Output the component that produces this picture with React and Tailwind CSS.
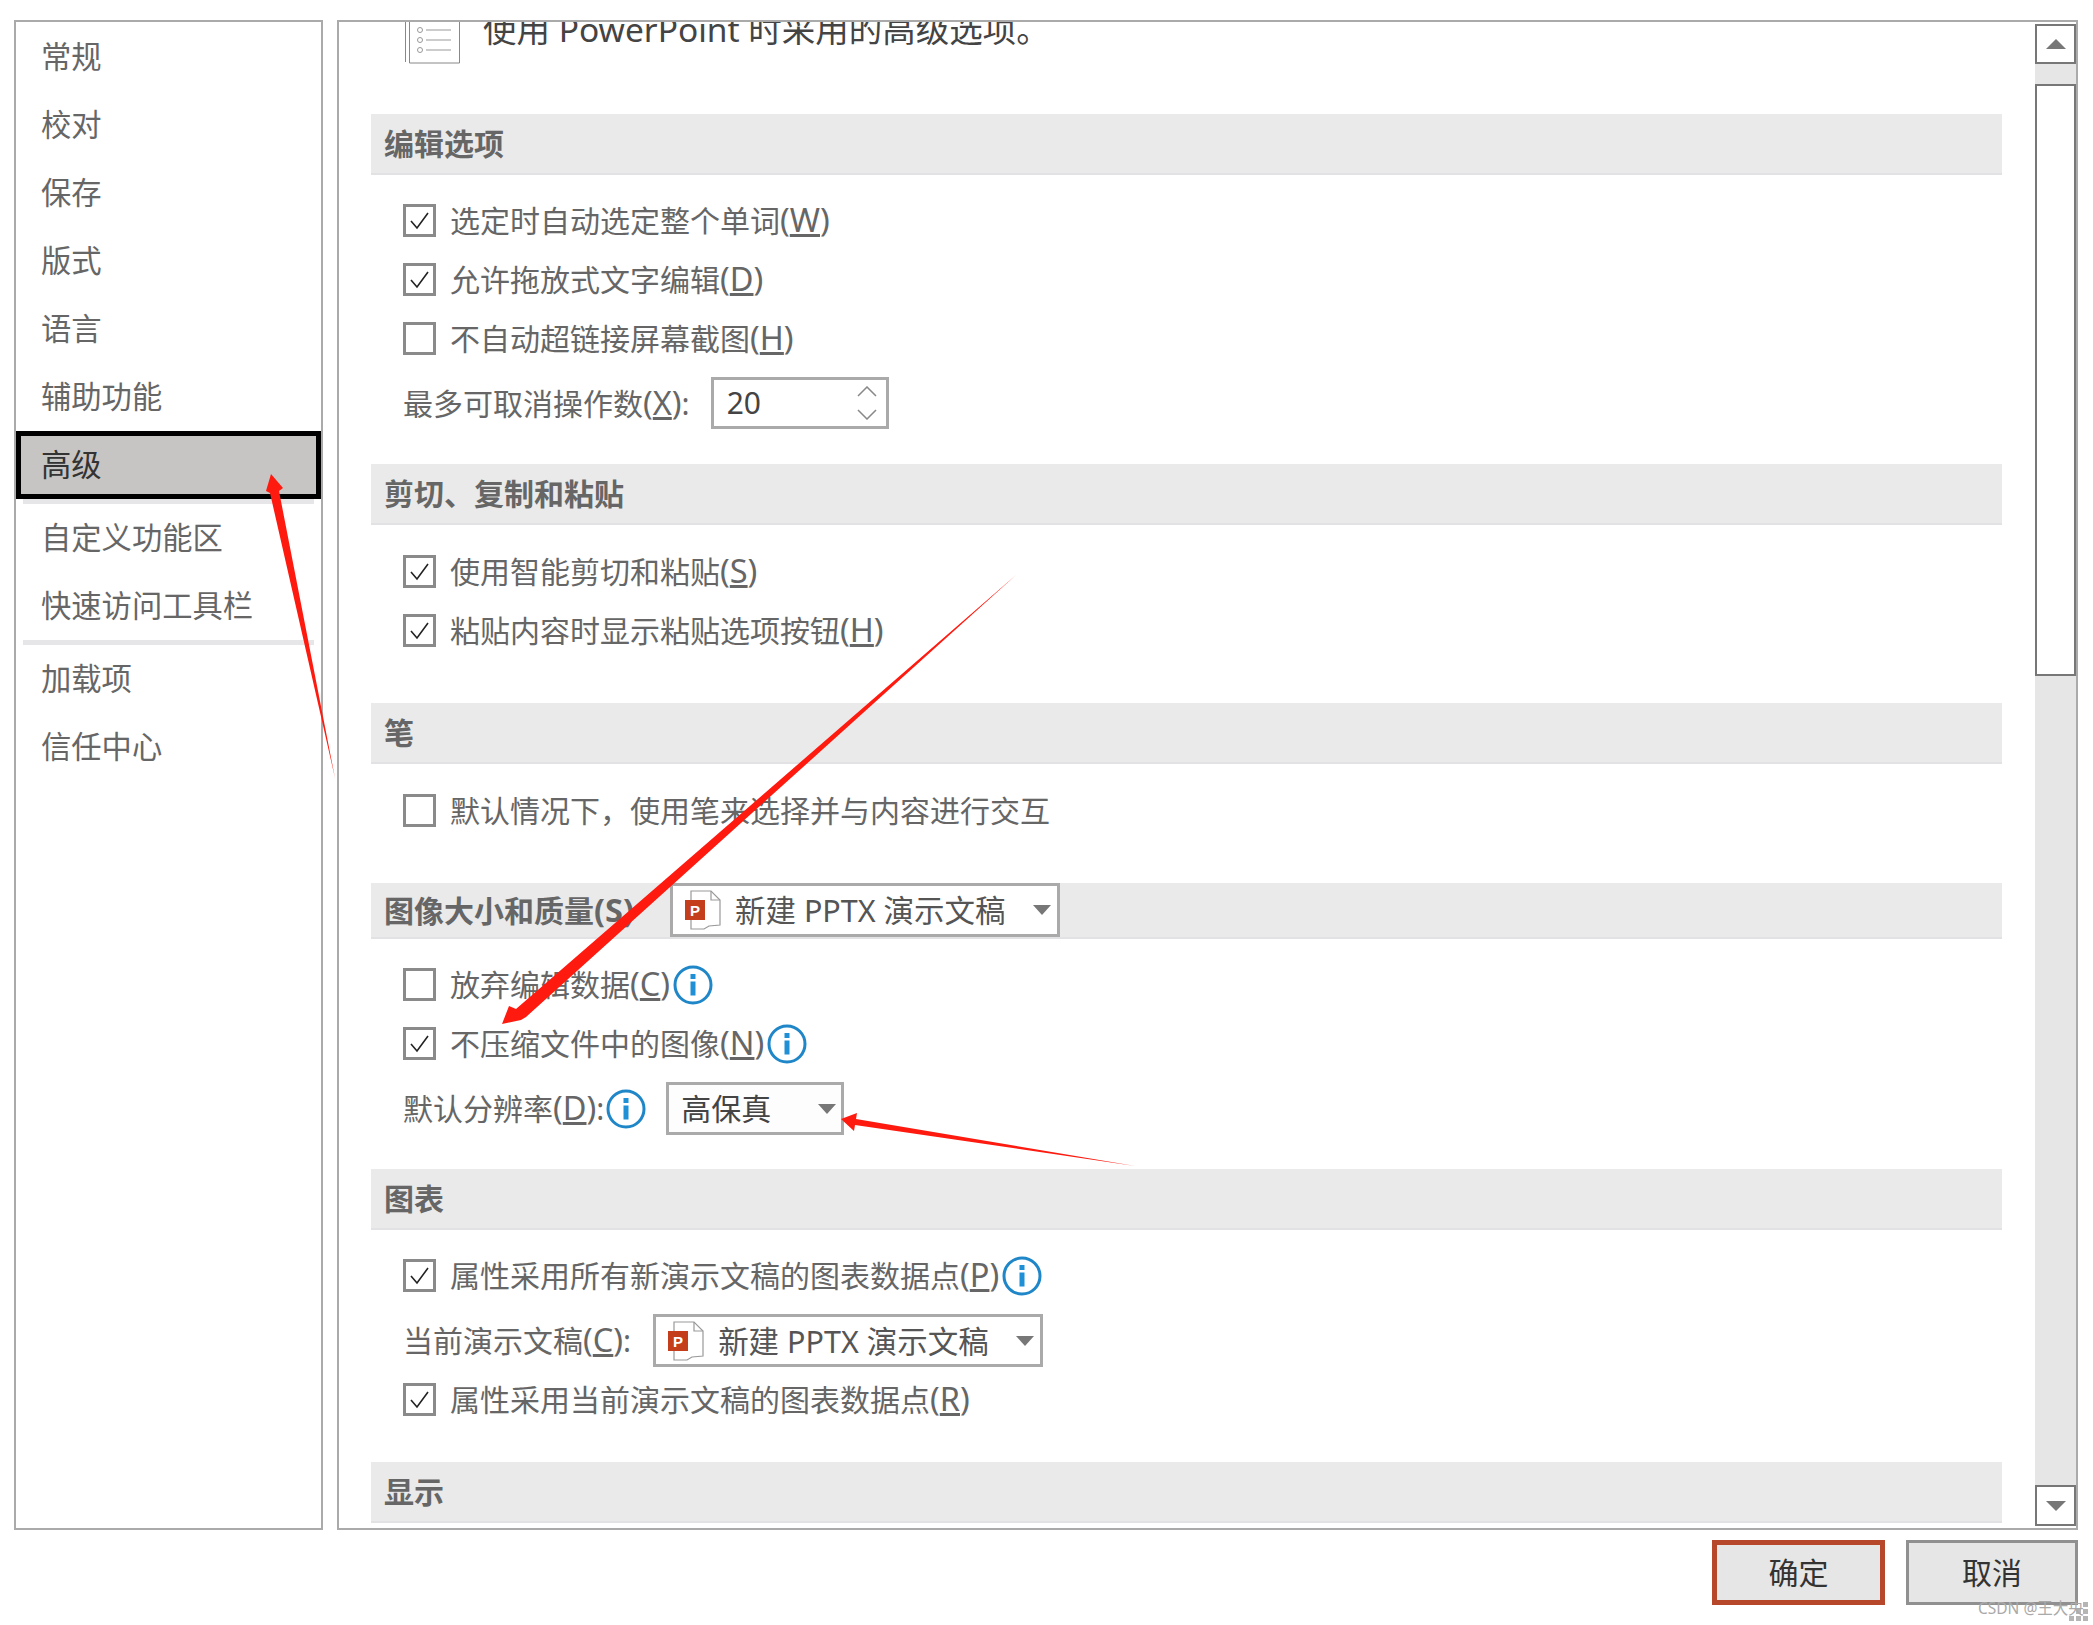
import React from "react";

const Caret = ({ className = "" }) => (
  <svg width="18" height="10" viewBox="0 0 18 10" className={className}>
    <polygon points="0,0 18,0 9,10" fill="#777" />
  </svg>
);

const Info = ({ className = "" }) => (
  <svg width="40" height="40" viewBox="0 0 40 40" className={`shrink-0 ${className}`}>
    <circle cx="20" cy="20" r="18" fill="#fff" stroke="#1f86c8" strokeWidth="3" />
    <rect x="17.5" y="9" width="5" height="5" fill="#1f8fd6" />
    <rect x="17.5" y="16.5" width="5" height="14" fill="#1f8fd6" />
  </svg>
);

const Ppt = ({ className = "" }) => (
  <svg width="46" height="40" viewBox="0 0 46 40" className={`shrink-0 ${className}`}>
    <path d="M6 1H26L35 10V35L24 36L19 39H6Z" fill="#fff" stroke="#999" strokeWidth="1.2" />
    <path d="M26 1V10H35" fill="none" stroke="#999" strokeWidth="1.2" />
    <rect x="0" y="10" width="20" height="20" fill="#c43e1c" />
    <text x="10" y="25.5" textAnchor="middle" fill="#fff" fontSize="15" fontWeight="700" fontFamily="'Liberation Sans', sans-serif">P</text>
  </svg>
);

const Check = ({ checked }) => (
  <span className="flex h-[33px] w-[33px] shrink-0 items-center justify-center border-[3px] border-[#8a8a8a] bg-white">
    {checked && (
      <svg width="21" height="21" viewBox="0 0 21 21">
        <path d="M2 11L8 18L19 3" fill="none" stroke="#222" strokeWidth="1.6" />
      </svg>
    )}
  </span>
);

const Key = ({ children }) => (
  <span className="text-[32.5px]">
    (<u>{children}</u>)
  </span>
);

const Row = ({ checked, children, info }) => (
  <div className="flex h-[59px] items-center pl-8">
    <Check checked={checked} />
    <span className="ml-[14px] whitespace-nowrap">{children}</span>
    {info && <Info className="ml-[3px]" />}
  </div>
);

const Header = ({ children, tall = true }) => (
  <div className={`flex items-center border-b-2 border-[#e2e2e4] bg-[#eaeaea] pl-[13px] font-bold ${tall ? "h-[61px]" : "h-[56px]"}`}>
    {children}
  </div>
);

const Nav = ({ children, active }) => (
  <div
    className={
      active
        ? "flex h-[68px] items-center border-[5px] border-black bg-[#c6c5c4] pl-5 text-[30.3px] text-[#333]"
        : "flex h-[68px] items-center pl-[25px] text-[30.3px]"
    }
  >
    {children}
  </div>
);

const Sep = () => <div className="mx-[7px] h-[5px] bg-[#e6e6e8]" />;

export default function App() {
  return (
    <div className="relative h-[1625px] w-[2093px] overflow-hidden bg-white pl-[14px] pt-5 font-['Noto_Sans','Noto_Sans_CJK_SC',sans-serif] text-[30px] leading-[40px] text-[#666]">
      <div className="flex gap-[14px]">
        <aside className="h-[1510px] w-[309px] border-2 border-[#aaaaaa] pt-px">
          <Nav>常规</Nav>
          <Nav>校对</Nav>
          <Nav>保存</Nav>
          <Nav>版式</Nav>
          <Nav>语言</Nav>
          <Nav>辅助功能</Nav>
          <Nav active>高级</Nav>
          <Sep />
          <Nav>自定义功能区</Nav>
          <Nav>快速访问工具栏</Nav>
          <Sep />
          <Nav>加载项</Nav>
          <Nav>信任中心</Nav>
        </aside>

        <main className="flex h-[1510px] w-[1741px] border-2 border-[#aaaaaa]">
          <div className="min-w-0 flex-1 overflow-hidden pl-8 pr-[33px]">
            <div className="flex h-[92px] items-start pl-[34px]">
              <svg width="56" height="42" viewBox="0 0 56 42" className="shrink-0">
                <path d="M0.5 0V40M4.5 0V41H54.5V0" fill="none" stroke="#888" strokeWidth="1" />
                <g fill="none" stroke="#999" strokeWidth="1">
                  <circle cx="15" cy="8" r="2.5" />
                  <circle cx="15" cy="18" r="2.5" />
                  <circle cx="15" cy="28" r="2.5" />
                  <path d="M21 8H46M21 18H46M21 28H46" />
                </g>
              </svg>
              <span className="-mt-[13px] ml-[22px] whitespace-nowrap text-[33.5px] text-[#444]">使用 PowerPoint 时采用的高级选项。</span>
            </div>

            <Header>编辑选项</Header>
            <div className="mt-4">
              <Row checked>选定时自动选定整个单词<Key>W</Key></Row>
              <Row checked>允许拖放式文字编辑<Key>D</Key></Row>
              <Row>不自动超链接屏幕截图<Key>H</Key></Row>
            </div>
            <div className="mt-2 flex h-[54px] items-center pl-8">
              <span className="whitespace-nowrap">最多可取消操作数<Key>X</Key>:</span>
              <div className="ml-[21px] flex h-[52px] w-[178px] items-center justify-between border-[3px] border-[#aaaaaa] pl-[13px] pr-[9px] text-[#444]">
                <span>20</span>
                <svg width="20" height="34" viewBox="0 0 20 34">
                  <path d="M1 10L10 1L19 10M1 24L10 33L19 24" fill="none" stroke="#888" strokeWidth="1.5" />
                </svg>
              </div>
            </div>

            <div className="mt-[34px]">
              <Header>剪切、复制和粘贴</Header>
            </div>
            <div className="mt-[17px]">
              <Row checked>使用智能剪切和粘贴<Key>S</Key></Row>
              <Row checked>粘贴内容时显示粘贴选项按钮<Key>H</Key></Row>
            </div>

            <div className="mt-[43px]">
              <Header>笔</Header>
            </div>
            <div className="mt-[17px]">
              <Row>默认情况下，使用笔来选择并与内容进行交互</Row>
            </div>

            <div className="mt-[43px]">
              <Header tall={false}>
                <span className="whitespace-nowrap pt-px">图像大小和质量<span className="text-[32.5px]">(S)</span></span>
                <div className="ml-[36px] flex h-[54px] w-[390px] items-center border-[3px] border-[#aaaaaa] bg-white pl-3 text-[30.5px] font-normal text-[#555]">
                  <Ppt />
                  <span className="ml-1 whitespace-nowrap">新建 PPTX 演示文稿</span>
                  <Caret className="ml-auto mr-[6px]" />
                </div>
              </Header>
            </div>
            <div className="mt-4">
              <Row info>放弃编辑数据<Key>C</Key></Row>
              <Row checked info>不压缩文件中的图像<Key>N</Key></Row>
            </div>
            <div className="mt-[9px] flex h-[53px] items-center pl-8">
              <span className="whitespace-nowrap">默认分辨率<Key>D</Key>:</span>
              <Info className="ml-[2px]" />
              <div className="ml-[20px] flex h-[53px] w-[178px] items-center border-[3px] border-[#aaaaaa] bg-[#fdfdfd] pl-3 text-[#444]">
                <span>高保真</span>
                <Caret className="ml-auto mr-[5px]" />
              </div>
            </div>

            <div className="mt-[34px]">
              <Header>图表</Header>
            </div>
            <div className="mt-4">
              <Row checked info>属性采用所有新演示文稿的图表数据点<Key>P</Key></Row>
            </div>
            <div className="mt-[9px] flex h-[53px] items-center pl-8">
              <span className="whitespace-nowrap">当前演示文稿<Key>C</Key>:</span>
              <div className="ml-[22px] flex h-[53px] w-[390px] items-center border-[3px] border-[#aaaaaa] bg-white pl-3 text-[30.5px] text-[#555]">
                <Ppt />
                <span className="ml-1 whitespace-nowrap">新建 PPTX 演示文稿</span>
                <Caret className="ml-auto mr-[6px]" />
              </div>
            </div>
            <div className="mt-[3px]">
              <Row checked>属性采用当前演示文稿的图表数据点<Key>R</Key></Row>
            </div>

            <div className="mt-[33px]">
              <Header>显示</Header>
            </div>
          </div>

          <div className="w-[41px] shrink-0 py-[2px]">
            <div className="flex h-full flex-col bg-[#e6e6e6]">
              <div className="flex h-[40px] items-center justify-center border-2 border-[#777] bg-white">
                <svg width="20" height="10" viewBox="0 0 20 10">
                  <polygon points="0,10 20,10 10,0" fill="#777" />
                </svg>
              </div>
              <div className="mt-5 h-[592px] border-2 border-[#777] bg-white" />
              <div className="mt-auto flex h-[41px] items-center justify-center border-2 border-[#777] bg-white">
                <svg width="20" height="10" viewBox="0 0 20 10">
                  <polygon points="0,0 20,0 10,10" fill="#777" />
                </svg>
              </div>
            </div>
          </div>
        </main>
      </div>

      <div className="mt-[10px] flex justify-end gap-[21px] pr-[15px] text-[#333]">
        <button className="flex h-[65px] w-[173px] items-center justify-center border-[5px] border-[#b7472a] bg-[#e6e6e6]">确定</button>
        <button className="flex h-[65px] w-[172px] items-center justify-center border-[3px] border-[#909090] bg-[#e6e6e6]">取消</button>
      </div>

      <svg className="pointer-events-none absolute inset-0" width="2093" height="1625" viewBox="0 0 2093 1625">
        <polygon points="271,474 283,488 279,491 335,778 270,493 266,491" fill="#ff1a0f" />
        <polygon points="502,1024 509,1006 516,1009 1016,575 526,1017 521,1020" fill="#ff1a0f" />
        <polygon points="841,1119 857,1113 856,1119 1135,1166 855,1125 854,1131" fill="#ff1a0f" />
        <g fill="#b5b5b5">
          <rect x="2083" y="1602" width="5" height="5" />
          <rect x="2076" y="1609" width="5" height="5" />
          <rect x="2083" y="1609" width="5" height="5" />
          <rect x="2069" y="1616" width="5" height="5" />
          <rect x="2076" y="1616" width="5" height="5" />
          <rect x="2083" y="1616" width="5" height="5" />
        </g>
      </svg>
      <span className="absolute left-[1978px] top-[1598px] whitespace-nowrap text-[15.5px] leading-5 text-[#aaaaaa]">CSDN @王大央</span>
    </div>
  );
}
